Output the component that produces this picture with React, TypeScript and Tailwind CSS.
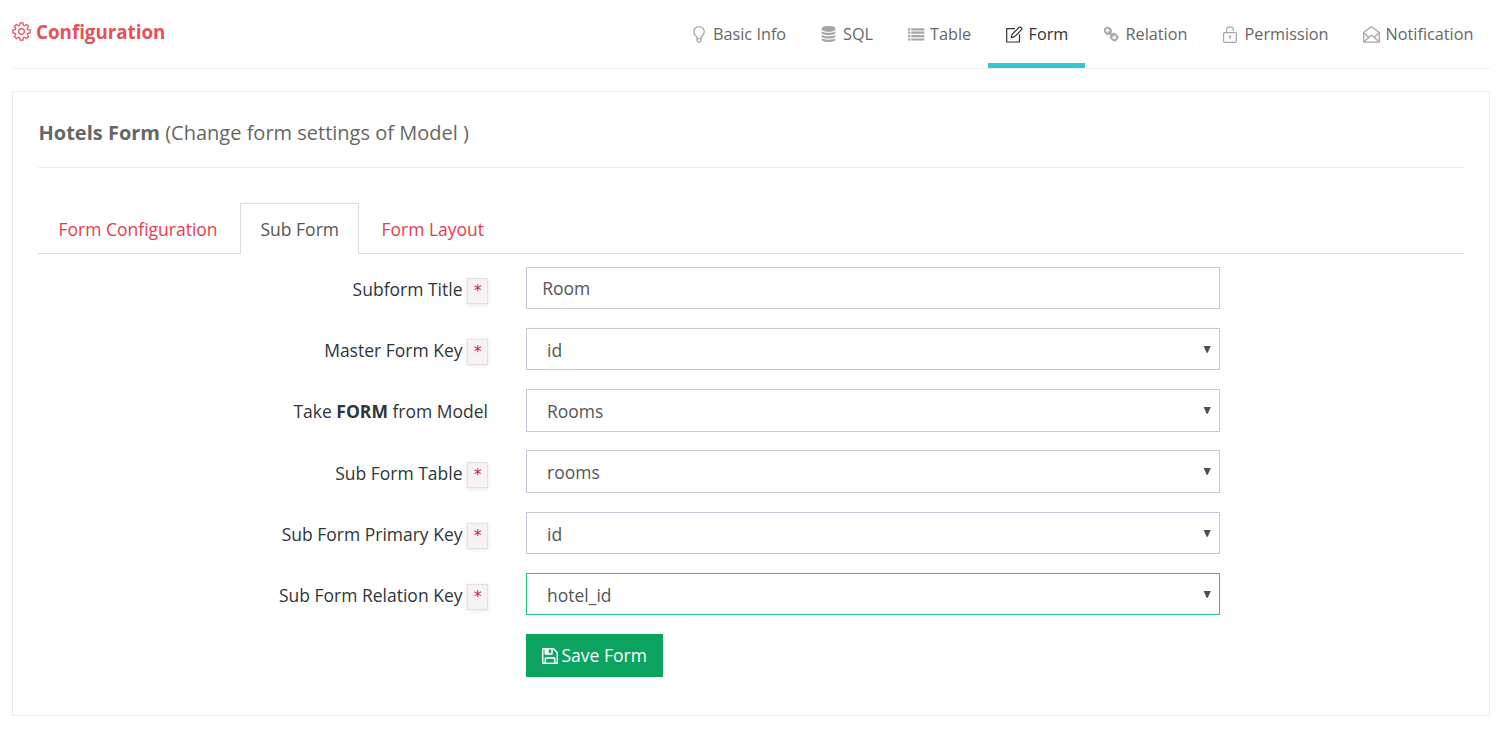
import React from "react";

type IconProps = { className?: string };

function Gear({ className = "" }: IconProps) {
  const pts: string[] = [];
  for (let i = 0; i < 8; i++) {
    const at = (deg: number, r: number) => {
      const a = ((i * 45 + deg) * Math.PI) / 180;
      return `${(10 + r * Math.sin(a)).toFixed(2)} ${(10 - r * Math.cos(a)).toFixed(2)}`;
    };
    pts.push(`${i === 0 ? "M" : "L"}${at(-10, 9.2)}L${at(10, 9.2)}L${at(13, 7.6)}Q${at(22.5, 5.8)} ${at(32, 7.6)}`);
  }
  return (
    <svg viewBox="0 0 20 20" className={className} fill="none" stroke="currentColor" strokeWidth="1.3" strokeLinejoin="round">
      <path d={pts.join("") + "Z"} />
      <circle cx="10" cy="10" r="3" />
    </svg>
  );
}

function Bulb({ className = "" }: IconProps) {
  return (
    <svg viewBox="0 0 12 17" className={className} fill="none" stroke="currentColor" strokeWidth="1.3">
      <path d="M4.1 12.6C4.1 9.8.7 9.1.7 5.8A5.3 5.1 0 0 1 11.3 5.8C11.3 9.1 7.9 9.8 7.9 12.6ZM4.1 12.6V14.6L5.2 16.2H6.8L7.9 14.6V12.6" />
    </svg>
  );
}

function Database({ className = "" }: IconProps) {
  return (
    <svg viewBox="0 0 1536 1792" className={className} fill="currentColor">
      <path d="M768 768q237 0 443-43t325-127v170q0 69-103 128t-280 93.5-385 34.5-385-34.5-280-93.5-103-128v-170q119 84 325 127t443 43zm0 768q237 0 443-43t325-127v170q0 69-103 128t-280 93.5-385 34.5-385-34.5-280-93.5-103-128v-170q119 84 325 127t443 43zm0-384q237 0 443-43t325-127v170q0 69-103 128t-280 93.5-385 34.5-385-34.5-280-93.5-103-128v-170q119 84 325 127t443 43zm0-1152q208 0 385 34.5t280 93.5 103 128v128q0 69-103 128t-280 93.5-385 34.5-385-34.5-280-93.5-103-128v-128q0-69 103-128t280-93.5 385-34.5z" />
    </svg>
  );
}

function List({ className = "" }: IconProps) {
  return (
    <svg viewBox="0 0 17 13" className={className} fill="currentColor">
      <path d="M0 .2H2.3V2.4H0ZM3.3 .2H16.3V2.4H3.3ZM0 3.6H2.3V5.8H0ZM3.3 3.6H16.3V5.8H3.3ZM0 7H2.3V9.2H0ZM3.3 7H16.3V9.2H3.3ZM0 10.4H2.3V12.6H0ZM3.3 10.4H16.3V12.6H3.3Z" />
    </svg>
  );
}

function Edit({ className = "" }: IconProps) {
  return (
    <svg viewBox="0 0 17 17" className={className} fill="none" stroke="currentColor" strokeWidth="1.2" strokeLinejoin="round">
      <path d="M9 2.6H.7V16H13.5V8.3" />
      <path d="M5.2 11.6L6.2 8.2L13.2 1.3Q14.2.6 15.3 1.6Q16.5 2.8 15.6 3.7L8.6 10.7Z" />
    </svg>
  );
}

function Chain({ className = "" }: IconProps) {
  return (
    <svg viewBox="64 64 1664 1664" className={className} fill="currentColor" stroke="currentColor" strokeWidth="40">
      <path d="M1456 1216q0-40-28-68l-208-208q-28-28-68-28-42 0-72 32 3 3 19 18.5t21.5 21.5 15 19 13 25.5 3.5 27.5q0 40-28 68t-68 28q-15 0-27.5-3.5t-25.5-13-19-15-21.5-21.5-18.5-19q-33 31-33 73 0 40 28 68l206 207q27 27 68 27 40 0 68-26l147-146q28-28 28-67zm-703-705q0-40-28-68l-206-207q-28-28-68-28-39 0-68 27l-147 146q-28 28-28 67 0 40 28 68l208 208q27 27 68 27 42 0 72-31-3-3-19-18.5t-21.5-21.5-15-19-13-25.5-3.5-27.5q0-40 28-68t68-28q15 0 27.5 3.5t25.5 13 19 15 21.5 21.5 18.5 19q33-31 33-73zm895 705q0 120-85 203l-147 146q-83 83-203 83-121 0-204-85l-206-207q-83-83-83-203 0-123 88-209l-88-88q-86 88-208 88-120 0-204-84l-208-208q-84-84-84-204t85-203l147-146q83-83 203-83 121 0 204 85l206 207q83 83 83 203 0 123-88 209l88 88q86-88 208-88 120 0 204 84l208 208q84 84 84 204z" />
    </svg>
  );
}

function Lock({ className = "" }: IconProps) {
  return (
    <svg viewBox="0 0 14 17" className={className} fill="none" stroke="currentColor" strokeWidth="1.2">
      <rect x=".6" y="6.6" width="12.8" height="9.8" rx="1.2" />
      <path d="M3.6 6.6V4.2A3.4 3.3 0 0 1 10.4 4.2V5" />
      <path d="M5.8 10.4H8.2M7 10V13.2" />
    </svg>
  );
}

function Envelope({ className = "" }: IconProps) {
  return (
    <svg viewBox="0 0 17 17" className={className} fill="none" stroke="currentColor" strokeWidth="1.3" strokeLinejoin="round">
      <path d="M.7 6.4L7.3 1.4Q8.5.5 9.7 1.4L16.3 6.4V16.1H.7Z" />
      <path d="M.8 6.7L5.4 10.9M16.2 6.7L11.6 10.9M1 15.7L7.3 9.9Q8.5 9 9.7 9.9L16 15.7" />
    </svg>
  );
}

function Floppy({ className = "" }: IconProps) {
  return (
    <svg viewBox="128 128 1536 1536" className={className} fill="currentColor" stroke="currentColor" strokeWidth="24">
      <path d="M512 1536h768v-384h-768v384zm896 0h128v-896q0-14-10-38.5t-20-34.5l-281-281q-10-10-34-20t-39-10v416q0 40-28 68t-68 28h-576q-40 0-68-28t-28-68v-416h-128v1280h128v-416q0-40 28-68t68-28h832q40 0 68 28t28 68v416zm-384-928v-320q0-13-9.5-22.5t-22.5-9.5h-192q-13 0-22.5 9.5t-9.5 22.5v320q0 13 9.5 22.5t22.5 9.5h192q13 0 22.5-9.5t9.5-22.5zm640 32v928q0 40-28 68t-68 28h-1344q-40 0-68-28t-28-68v-1344q0-40 28-68t68-28h928q40 0 88 20t76 48l280 280q28 28 48 76t20 88z" />
    </svg>
  );
}

const nav = [
  { label: "Basic Info", icon: <Bulb className="h-[17px] w-3" />, item: "w-[129px] pl-[17.5px]", gap: "ml-[8.5px]" },
  { label: "SQL", icon: <Database className="h-4 w-[15px]" />, item: "w-[87px] pl-[17px]", gap: "ml-[7px]" },
  { label: "Table", icon: <List className="h-[13px] w-[17px]" />, item: "w-[97px] pl-[17px]", gap: "ml-[5px]" },
  { label: "Form", icon: <Edit className="h-[17px] w-[17px]" />, item: "w-[97px] pl-[18px]", gap: "ml-[5.5px]", active: true },
  { label: "Relation", icon: <Chain className="h-[15px] w-[15px]" />, item: "w-[120px] pl-[18.5px]", gap: "ml-[7px]" },
  { label: "Permission", icon: <Lock className="h-[17px] w-[14px]" />, item: "w-[140px] pl-[18px]", gap: "ml-[7.5px]" },
  { label: "Notification", icon: <Envelope className="h-[17px] w-[17px]" />, item: "w-[145px] pl-[18px]", gap: "ml-[5.5px]" },
];

type Field = {
  label: React.ReactNode;
  value: string;
  required: boolean;
  kind: "text" | "select";
  valid?: boolean;
  height: string;
  labelPad?: string;
  arrow?: string;
};

const fields: Field[] = [
  { label: "Subform Title", value: "Room", required: true, kind: "text", height: "h-[42px] mb-[19px]" },
  { label: "Master Form Key", value: "id", required: true, kind: "select", height: "h-[42px] mb-[19px]" },
  { label: <>Take <b>FORM</b> from Model</>, value: "Rooms", required: false, kind: "select", height: "h-[43px] mb-[18px]", arrow: "mt-[-2px]" },
  { label: "Sub Form Table", value: "rooms", required: true, kind: "select", height: "h-[43px] mb-[19px]", labelPad: "pt-[3px]", arrow: "mt-[-2px]" },
  { label: "Sub Form Primary Key", value: "id", required: true, kind: "select", height: "h-[42px] mb-[19px]" },
  { label: "Sub Form Relation Key", value: "hotel_id", required: true, kind: "select", valid: true, height: "h-[42px] mb-[19px]" },
];

function FieldRow({ field }: { field: Field }) {
  return (
    <div className={`flex ${field.height}`}>
      <div className={`flex w-[450px] items-center justify-end whitespace-pre text-[#2f353b] ${field.labelPad ?? "pt-[2px]"}`}>
        <span>{field.label}</span>
        {field.required && (
          <code className="mt-[3px] ml-[4px] flex h-[26px] w-[21.5px] items-center justify-center border border-[#e1e1e8] bg-[#f9f2f4] pb-[1px] pl-[1px] font-['DejaVu_Sans_Mono',monospace] text-[15.75px] text-[#c7254e] shadow-[0_1px_4px_rgba(0,0,0,0.1)]">
            *
          </code>
        )}
      </div>
      <div
        className={`ml-[38px] flex w-[694px] items-center justify-between border bg-white pr-[8px] text-[#555555] ${
          field.valid ? "border-[#26c281]" : "border-[#c2cad8]"
        } ${field.kind === "text" ? "pl-[15.2px]" : "pt-[2px] pl-[20px]"}`}
      >
        <span>{field.value}</span>
        {field.kind === "select" && (
          <svg viewBox="0 0 8 7" className={`h-[7px] w-2 ${field.arrow ?? "mt-[-1px]"}`} fill="#505050">
            <path d="M.6 0H7.8L4.8 6.8H3.6Z" />
          </svg>
        )}
      </div>
    </div>
  );
}

export default function App() {
  return (
    <div className="h-[745px] w-[1506px] overflow-hidden bg-white pr-[16px] pl-[12px] font-['Open_Sans',sans-serif] text-[17.5px] leading-[25px] text-[#666666]">
      <header className="flex h-[69px] justify-between border-b border-[#eef1f5]">
        <div className="flex h-[62px] items-center text-[#e7505a]">
          <Gear className="h-[19px] w-[19px]" />
          <h1 className="ml-[5px] pt-[1px] text-[18.75px] font-bold">Configuration</h1>
        </div>
        <nav className="flex text-[16.25px]">
          {nav.map((n) => (
            <a
              key={n.label}
              className={`flex items-center whitespace-nowrap border-b-[5px] pt-[5px] ${n.item} ${
                n.active ? "border-[#36c6d3] text-[#333333]" : "border-transparent"
              }`}
            >
              <span className={n.active ? "text-[#333333]" : "text-[#a6a6a6]"}>{n.icon}</span>
              <span className={n.gap}>{n.label}</span>
            </a>
          ))}
        </nav>
      </header>

      <main className="mt-[22px] h-[625px] border border-[#e7ecf1] px-[25px]">
        <h2 className="h-[76px] border-b border-[#eeeeee] pt-[28px] pl-[0.5px] text-[20px] leading-[26px]">
          <b className="font-bold">Hotels Form</b> <span>(Change form settings of Model )</span>
        </h2>

        <div className="mt-[35px] flex h-[51px] border-b border-[#dddddd] text-[#e73d4a]">
          <a className="w-[202px] pt-[14px] pl-[20.5px]">Form Configuration</a>
          <a className="h-[51px] w-[119px] border border-b-0 border-[#dddddd] bg-white pt-[13px] pl-[19.5px] text-[#555555]">Sub Form</a>
          <a className="pt-[14px] pl-[22.5px]">Form Layout</a>
        </div>

        <form className="mt-[13px]">
          {fields.map((f, i) => (
            <FieldRow key={i} field={f} />
          ))}
          <button type="button" className="ml-[488px] flex h-[43px] w-[137px] items-center bg-[#0ba360] pl-[16px] text-white">
            <Floppy className="h-4 w-4" />
            <span className="ml-[3.5px] whitespace-nowrap">Save Form</span>
          </button>
        </form>
      </main>
    </div>
  );
}
